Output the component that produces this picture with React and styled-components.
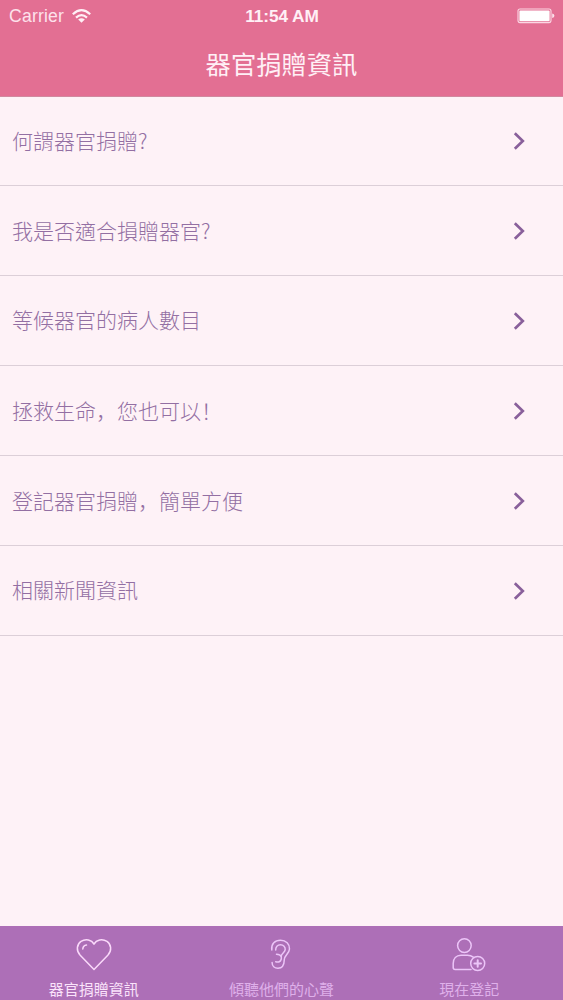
import React, { useState } from 'react';
import styled, { createGlobalStyle } from 'styled-components';

const GlobalStyle = createGlobalStyle`
  * {
    box-sizing: border-box;
  }

  body {
    margin: 0;
    font-family: 'Liberation Sans', 'Noto Sans CJK TC', sans-serif;
    background: #fef2f7;
  }
`;

const Screen = styled.div`
  display: flex;
  flex-direction: column;
  height: 1000px;
  background: #fef2f7;
`;

const Header = styled.header`
  height: 97px;
  background: #e36f93;
  border-bottom: 1px solid #d1899f;
  color: #fff0f6;
`;

const StatusBar = styled.div`
  display: grid;
  grid-template-columns: 1fr auto 1fr;
  align-items: center;
  height: 32px;
  padding: 0 8px 0 9px;
`;

const Carrier = styled.div`
  display: flex;
  align-items: center;
  gap: 8px;
  font-size: 17.6px;
  letter-spacing: 0.2px;
  color: #fde1eb;
`;

const Clock = styled.div`
  font-size: 17.3px;
  font-weight: bold;
  letter-spacing: -0.1px;
`;

const BatteryIcon = styled.svg`
  justify-self: end;
`;

const Title = styled.h1`
  margin: 0;
  height: 64px;
  line-height: 62px;
  text-align: center;
  font-family: 'Noto Sans CJK TC', sans-serif;
  font-size: 25.3px;
  font-weight: 400;
`;

const List = styled.main`
  flex: 1;
`;

const Row = styled.div`
  display: flex;
  align-items: center;
  justify-content: space-between;
  height: ${props => (props.first ? '89px' : '90px')};
  padding: 0 37px 0 12px;
  border-bottom: 1px solid #dccfd8;
  cursor: pointer;
`;

const RowLabel = styled.div`
  font-family: 'Liberation Sans', 'Noto Sans CJK TC', sans-serif;
  font-size: 21px;
  font-weight: 300;
  line-height: 30px;
  color: #936fa3;
`;

const Comma = styled.span`
  font-family: 'Noto Sans CJK SC', sans-serif;
`;

const Mark = styled.span`
  font-family: 'Noto Sans CJK TC', sans-serif;
`;

const TabBar = styled.nav`
  display: grid;
  grid-template-columns: repeat(3, 1fr);
  height: 74px;
  background: #ad6fb7;
`;

const Tab = styled.button`
  display: flex;
  flex-direction: column;
  align-items: center;
  padding: 10px 0 0;
  border: none;
  background: none;
  color: ${props => (props.active ? '#fbe3fb' : '#dfb0ea')};
  cursor: pointer;
`;

const TabIcon = styled.svg`
  display: block;
  fill: none;
  stroke: ${props => (props.active ? '#fad9fa' : '#ecc5f8')};
  stroke-width: 1.5;
  stroke-linecap: round;
  stroke-linejoin: round;
`;

const TabLabel = styled.span`
  margin-top: 6px;
  font-family: 'Noto Sans CJK TC', sans-serif;
  font-size: 15px;
  line-height: 22px;
`;

const rows = [
  <>何謂器官捐贈<Mark>?</Mark></>,
  <>我是否適合損贈器官<Mark>?</Mark></>,
  <>等候器官的病人數目</>,
  <>拯救生命<Comma>，</Comma>您也可以<Comma>！</Comma></>,
  <>登記器官捐贈<Comma>，</Comma>簡單方便</>,
  <>相關新聞資訊</>,
];

const tabs = [
  {
    id: 'info',
    label: '器官捐贈資訊',
    icon: (
      <>
        <path d="M18 33.5 L4.2 19.2 C-0.2 14.4 0.8 8.3 5 5.4 C9.7 2.3 15.6 3.6 18 8.2 C20.4 3.6 26.3 2.3 31 5.4 C35.2 8.3 36.2 14.4 31.8 19.2 Z" />
        <path d="M6.8 13 C7 10.6 8.4 9.3 10.5 9" />
      </>
    ),
  },
  {
    id: 'stories',
    label: '傾聽他們的心聲',
    icon: (
      <>
        <path d="M8.8 14 C8 8 12 4.2 17.5 4.2 C23 4.2 26.8 8 26.5 13 C26.3 17.5 21.5 19.5 21.3 23.5 C21.2 29 19.5 32.3 15 32.3 C11.5 32.3 9.1 30 9.1 26.5" />
        <path d="M12.7 14 C12.5 10.8 14.5 8.8 17.5 8.8 C20.5 8.8 22.4 10.8 22.2 13.6 C22 16.5 18.3 17.5 18.2 20.3 C18.3 21.5 18.5 22 18.2 23.2 C17.5 25.8 15.5 26.6 12.7 25.7" />
        <path d="M13.5 18.2 C15.5 18.3 17.4 19 18.2 20.5" />
      </>
    ),
  },
  {
    id: 'register',
    label: '現在登記',
    icon: (
      <>
        <circle cx="13.4" cy="9.6" r="6.8" />
        <path d="M20 33.6 H4.2 Q2.2 33.6 2.2 31.6 V27.5 C2.2 22.5 5.2 19.2 10 19.2 H16.5 C19 19.2 20.8 20 22.3 21.2" />
        <circle cx="26.7" cy="27.5" r="7" />
        <path d="M26.7 24.2 V30.8 M23.4 27.5 H30" strokeWidth="2" />
      </>
    ),
  },
];

function App() {
  const [activeTab, setActiveTab] = useState('info');

  return (
    <Screen>
      <GlobalStyle />
      <Header>
        <StatusBar>
          <Carrier>
            Carrier
            <svg width="19" height="14" viewBox="0 0 19 14" fill="none" stroke="#fff0f6" strokeWidth="2.2">
              <path d="M0.8 5.2 Q9.5 -2.8 18.2 5.2" />
              <path d="M4 8.6 Q9.5 3.6 15 8.6" />
              <path d="M6.2 10.5 Q9.5 7.8 12.8 10.5 L9.5 13.8 Z" fill="#fff0f6" stroke="none" />
            </svg>
          </Carrier>
          <Clock>11:54 AM</Clock>
          <BatteryIcon width="38" height="16" viewBox="0 0 38 16">
            <rect x="1" y="1" width="33" height="13.6" rx="2" fill="none" stroke="#fbd7e4" strokeWidth="1.1" />
            <rect x="2.4" y="2.4" width="30.2" height="10.8" rx="1" fill="#fff" />
            <path d="M35.2 5.5 Q37.4 6 37.4 7.8 Q37.4 9.6 35.2 10.1 Z" fill="#fbe0ea" />
          </BatteryIcon>
        </StatusBar>
        <Title>器官捐贈資訊</Title>
      </Header>

      <List>
        {rows.map((label, index) => (
          <Row key={index} first={index === 0 ? 1 : 0}>
            <RowLabel>{label}</RowLabel>
            <svg width="13" height="20" viewBox="0 0 13 20" fill="none" stroke="#89609b" strokeWidth="2.7">
              <path d="M1.8 2.2 L9.8 10 L1.8 17.8" />
            </svg>
          </Row>
        ))}
      </List>

      <TabBar>
        {tabs.map((tab) => {
          const active = tab.id === activeTab ? 1 : 0;
          return (
            <Tab key={tab.id} active={active} onClick={() => setActiveTab(tab.id)}>
              <TabIcon active={active} width="36" height="36" viewBox="0 0 36 36">
                {tab.icon}
              </TabIcon>
              <TabLabel>{tab.label}</TabLabel>
            </Tab>
          );
        })}
      </TabBar>
    </Screen>
  );
}

export default App;
